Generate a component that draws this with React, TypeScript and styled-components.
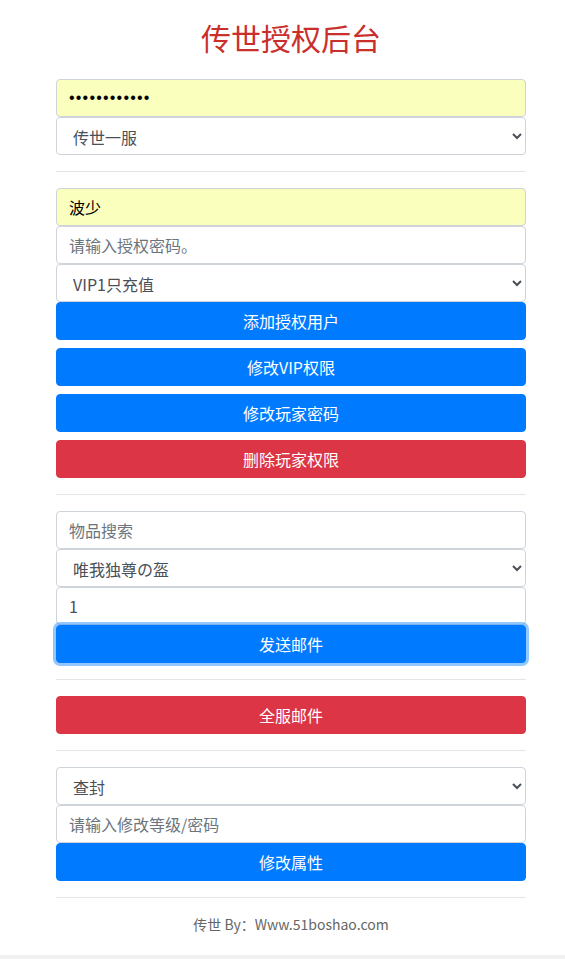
import React from "react";
import styled, { createGlobalStyle } from "styled-components";

const GlobalStyle = createGlobalStyle`
  html {
    background: #f1f1f1;
  }
  body {
    margin: 0;
    font-family: "Noto Sans CJK SC", "Noto Sans", "Liberation Sans", sans-serif;
    color: #212529;
  }
  #root {
    background: #fff;
  }
`;

const Page = styled.div`
  width: 470px;
  margin-left: 56px;
  padding-top: 19px;
`;

const Title = styled.h1`
  margin: 0 0 24px;
  text-align: center;
  font-size: 30px;
  line-height: 36px;
  font-weight: 400;
  color: #c9302c;
`;

const Group = styled.div`
  display: flex;
  flex-direction: column;
`;

const Field = styled.input<{ $filled?: boolean }>`
  display: block;
  box-sizing: border-box;
  width: 100%;
  height: 38px;
  padding: 6px 12px;
  font-family: inherit;
  font-size: 16px;
  line-height: 1.5;
  color: ${p => (p.$filled ? "#000" : "#495057")};
  background: ${p => (p.$filled ? "#faffbd" : "#fff")};
  border: 1px solid #ced4da;
  border-radius: 4px;
  outline: none;

  &[type="password"] {
    font-family: "Liberation Sans", Arial, sans-serif;
    letter-spacing: 1.2px;
  }

  &::placeholder {
    color: #6c757d;
  }
`;

const Picker = styled.select`
  display: block;
  box-sizing: border-box;
  width: 100%;
  height: 38px;
  padding: 6px 10px 6px 12px;
  font-family: inherit;
  font-size: 16px;
  color: #495057;
  background: #fff;
  border: 1px solid #ced4da;
  border-radius: 4px;
  outline: none;
`;

const Button = styled.button<{ $tone?: "primary" | "danger"; $focused?: boolean }>`
  display: block;
  box-sizing: border-box;
  width: 100%;
  height: 38px;
  padding: 0 12px;
  font-family: inherit;
  font-size: 16px;
  color: #fff;
  background: ${p => (p.$tone === "danger" ? "#dc3545" : "#007bff")};
  border: 1px solid ${p => (p.$tone === "danger" ? "#dc3545" : "#007bff")};
  border-radius: 4px;
  cursor: pointer;
  box-shadow: ${p => (p.$focused ? "0 0 0 3px rgba(38, 143, 255, 0.5)" : "none")};
  outline: none;

  & + & {
    margin-top: 8px;
  }
`;

const Rule = styled.hr<{ $last?: boolean }>`
  margin: 16px 0 ${p => (p.$last ? "0" : "16px")};
  border: 0;
  border-top: 1px solid rgba(0, 0, 0, 0.1);
`;

const Footer = styled.footer`
  height: 57px;
  display: flex;
  align-items: center;
  justify-content: center;
  font-size: 14px;
  color: #666;
  padding-bottom: 6px;
  box-sizing: border-box;
`;

export default function App() {
  return (
    <>
      <GlobalStyle />
      <Page>
        <Title>传世授权后台</Title>

        <Group>
          <Field type="password" defaultValue="123456789012" $filled />
          <Picker defaultValue="1">
            <option value="1">传世一服</option>
            <option value="2">传世二服</option>
          </Picker>
        </Group>

        <Rule />

        <Group>
          <Field type="text" defaultValue="波少" $filled />
          <Field type="text" placeholder="请输入授权密码。" />
          <Picker defaultValue="vip1">
            <option value="vip1">VIP1只充值</option>
            <option value="vip2">VIP2</option>
          </Picker>
          <Button>添加授权用户</Button>
          <Button>修改VIP权限</Button>
          <Button>修改玩家密码</Button>
          <Button $tone="danger">删除玩家权限</Button>
        </Group>

        <Rule />

        <Group>
          <Field type="text" placeholder="物品搜索" />
          <Picker defaultValue="a">
            <option value="a">唯我独尊の盔</option>
          </Picker>
          <Field type="text" defaultValue="1" />
          <Button $focused>发送邮件</Button>
        </Group>

        <Rule />

        <Group>
          <Button $tone="danger">全服邮件</Button>
        </Group>

        <Rule />

        <Group>
          <Picker defaultValue="chafeng">
            <option value="chafeng">查封</option>
            <option value="jiefeng">解封</option>
          </Picker>
          <Field type="text" placeholder="请输入修改等级/密码" />
          <Button>修改属性</Button>
        </Group>

        <Rule $last />

        <Footer>传世 By：Www.51boshao.com</Footer>
      </Page>
    </>
  );
}
